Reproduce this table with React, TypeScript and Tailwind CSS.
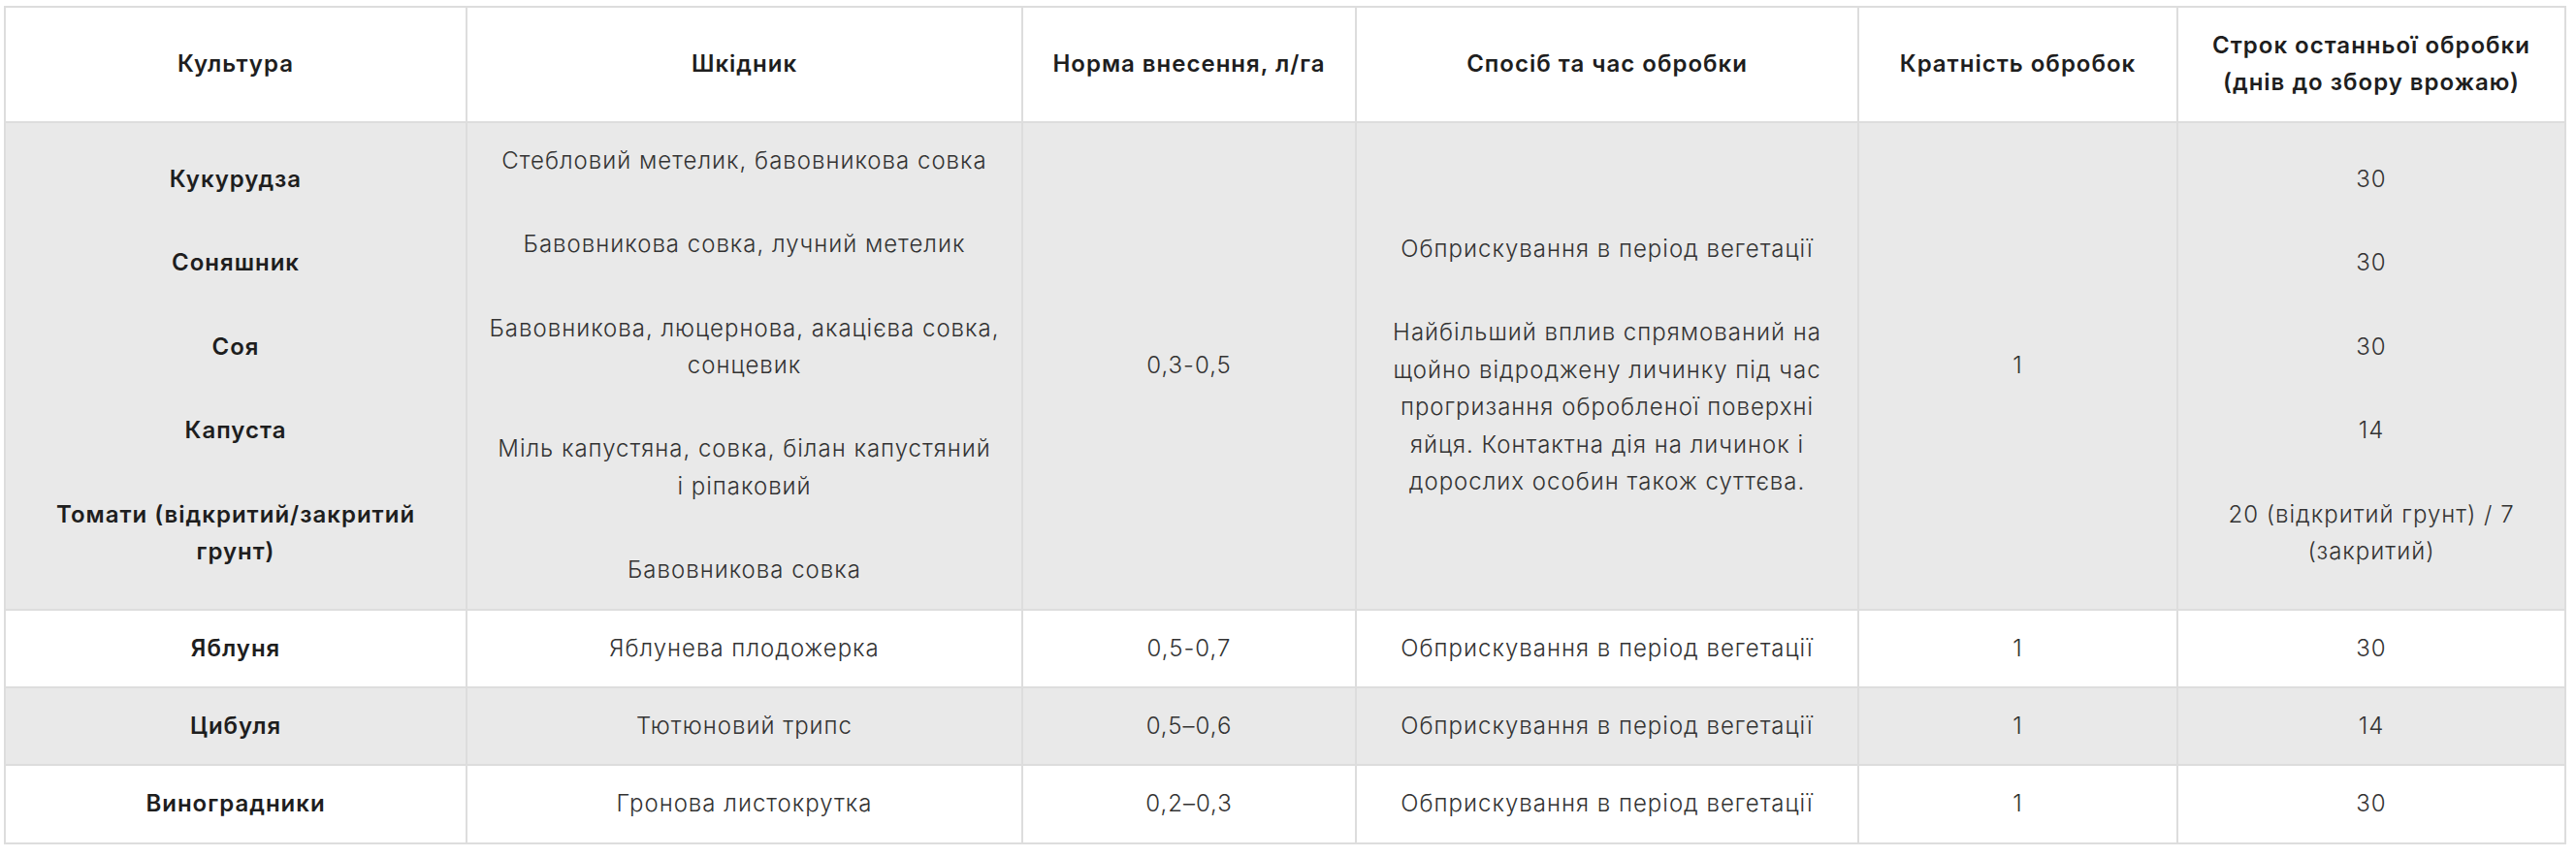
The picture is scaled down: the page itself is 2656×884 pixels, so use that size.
const headers = [
  ['Культура'],
  ['Шкідник'],
  ['Норма внесення, л/га'],
  ['Спосіб та час обробки'],
  ['Кратність обробок'],
  ['Строк останньої обробки', '(днів до збору врожаю)'],
]

const widths = ['w-[476px]', 'w-[573px]', 'w-[344px]', 'w-[518px]', 'w-[329px]', 'w-[400px]']

const bigRow = {
  crops: [['Кукурудза'], ['Соняшник'], ['Соя'], ['Капуста'], ['Томати (відкритий/закритий', 'грунт)']],
  pests: [
    ['Стебловий метелик, бавовникова совка'],
    ['Бавовникова совка, лучний метелик'],
    ['Бавовникова, люцернова, акацієва совка,', 'сонцевик'],
    ['Міль капустяна, совка, білан капустяний', 'і ріпаковий'],
    ['Бавовникова совка'],
  ],
  rate: '0,3-0,5',
  method: [
    ['Обприскування в період вегетації'],
    [
      'Найбільший вплив спрямований на',
      'щойно відроджену личинку під час',
      'прогризання обробленої поверхні',
      'яйця. Контактна дія на личинок і',
      'дорослих особин також суттєва.',
    ],
  ],
  times: '1',
  days: [['30'], ['30'], ['30'], ['14'], ['20 (відкритий грунт) / 7', '(закритий)']],
}

const rows = [
  { crop: 'Яблуня', pest: 'Яблунева плодожерка', rate: '0,5-0,7', days: '30', gray: false },
  { crop: 'Цибуля', pest: 'Тютюновий трипс', rate: '0,5–0,6', days: '14', gray: true },
  { crop: 'Виноградники', pest: 'Гронова листокрутка', rate: '0,2–0,3', days: '30', gray: false },
]

const cell = 'border-2 border-[#dddddd] px-4 py-5 text-center align-middle'
const bold = 'font-semibold text-[#1e1e1e]'
const body = 'font-light text-[#333333]'

function Paras({ items }: { items: string[][] }) {
  return (
    <div className="flex flex-col gap-[48px]">
      {items.map((lines, i) => (
        <p key={i} className="whitespace-nowrap">
          {lines.map((l, j) => (
            <span key={j} className="block">
              {l}
            </span>
          ))}
        </p>
      ))}
    </div>
  )
}

export default function App() {
  return (
    <div className="min-h-screen bg-white pl-[4px] pt-[6px] font-['Inter','Noto_Sans',sans-serif] text-[24px] leading-[1.6] tracking-[1px]">
      <table className="w-[2640px] table-fixed border-collapse">
        <colgroup>
          {widths.map((w, i) => (
            <col key={i} className={w} />
          ))}
        </colgroup>
        <thead>
          <tr className="bg-white">
            {headers.map((h, i) => (
              <th key={i} className={`${cell} ${bold}`}>
                {h.map((l, j) => (
                  <span key={j} className="block whitespace-nowrap">
                    {l}
                  </span>
                ))}
              </th>
            ))}
          </tr>
        </thead>
        <tbody>
          <tr className="bg-[#e9e9e9]">
            <td className={`${cell} ${bold}`}>
              <Paras items={bigRow.crops} />
            </td>
            <td className={`${cell} ${body}`}>
              <Paras items={bigRow.pests} />
            </td>
            <td className={`${cell} ${body}`}>{bigRow.rate}</td>
            <td className={`${cell} ${body}`}>
              <Paras items={bigRow.method} />
            </td>
            <td className={`${cell} ${body}`}>{bigRow.times}</td>
            <td className={`${cell} ${body}`}>
              <Paras items={bigRow.days} />
            </td>
          </tr>
          {rows.map((r, i) => (
            <tr key={i} className={r.gray ? 'bg-[#e9e9e9]' : 'bg-white'}>
              <td className={`${cell} h-[80px] ${bold}`}>{r.crop}</td>
              <td className={`${cell} ${body}`}>{r.pest}</td>
              <td className={`${cell} ${body}`}>{r.rate}</td>
              <td className={`${cell} ${body}`}>Обприскування в період вегетації</td>
              <td className={`${cell} ${body}`}>1</td>
              <td className={`${cell} ${body}`}>{r.days}</td>
            </tr>
          ))}
        </tbody>
      </table>
    </div>
  )
}
